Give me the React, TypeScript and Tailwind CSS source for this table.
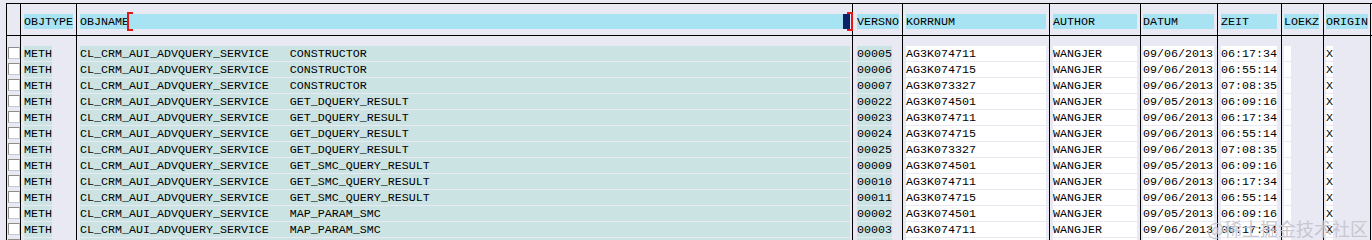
import React from "react";

const rows: string[][] = [
  ["CONSTRUCTOR", "00005", "AG3K074711", "09/06/2013", "06:17:34"],
  ["CONSTRUCTOR", "00006", "AG3K074715", "09/06/2013", "06:55:14"],
  ["CONSTRUCTOR", "00007", "AG3K073327", "09/06/2013", "07:08:35"],
  ["GET_DQUERY_RESULT", "00022", "AG3K074501", "09/05/2013", "06:09:16"],
  ["GET_DQUERY_RESULT", "00023", "AG3K074711", "09/06/2013", "06:17:34"],
  ["GET_DQUERY_RESULT", "00024", "AG3K074715", "09/06/2013", "06:55:14"],
  ["GET_DQUERY_RESULT", "00025", "AG3K073327", "09/06/2013", "07:08:35"],
  ["GET_SMC_QUERY_RESULT", "00009", "AG3K074501", "09/05/2013", "06:09:16"],
  ["GET_SMC_QUERY_RESULT", "00010", "AG3K074711", "09/06/2013", "06:17:34"],
  ["GET_SMC_QUERY_RESULT", "00011", "AG3K074715", "09/06/2013", "06:55:14"],
  ["MAP_PARAM_SMC", "00002", "AG3K074501", "09/05/2013", "06:09:16"],
  ["MAP_PARAM_SMC", "00003", "AG3K074711", "09/06/2013", "06:17:34"],
  ["MAP_PARAM_SMC", "00004", "AG3K074715", "09/06/2013", "06:55:14"],
];

const font = "font-['Liberation_Mono',monospace] text-[11.67px] leading-[17px] text-black whitespace-pre";

const cellTeal = "h-[15px] bg-[#cbe3e3] " + font;
const cellWhite = "h-[15px] bg-white " + font;
const cellHead = "h-[15px] bg-[#a8e3f3] " + font;

function Row({ h, children }: { h: string; children: React.ReactNode }) {
  return <div className={"flex " + h}>{children}</div>;
}

export default function App() {
  return (
    <div className="relative w-[1372px] h-[240px] overflow-hidden bg-[#e9e9f4]">
      <div className="mt-[3px] ml-[6px] w-[1366px] border-t border-black">
        {/* header */}
        <div className="flex h-[32px] border-b border-black">
          <div className="w-[14px] border-l border-black" />
          <div className="w-[56px] border-l border-black pl-[3px] pt-[10px]">
            <div className={cellHead + " w-[49px]"}>OBJTYPE</div>
          </div>
          <div className="w-[776px] border-l border-black pl-[3px] pt-[10px]">
            <div className="relative flex w-[770px]">
              <div className={cellHead + " w-[763px]"}>OBJNAME</div>
              <div className="h-[15px] w-[7px] bg-[#0c2268]" />
              <div className="absolute left-[47px] top-[-2px] h-[19px] w-[6px] border-l-2 border-t-2 border-b-2 border-[#e01818]" />
              <div className="absolute left-[767px] top-[-2px] h-[19px] w-[6px] border-r-2 border-t-2 border-b-2 border-[#e01818]" />
            </div>
          </div>
          <div className="w-[50px] border-l border-black pl-[4px] pt-[10px]">
            <div className={cellHead + " w-[42px]"}>VERSNO</div>
          </div>
          <div className="w-[147px] border-l border-black pl-[3px] pt-[10px]">
            <div className={cellHead + " w-[140px]"}>KORRNUM</div>
          </div>
          <div className="w-[91px] border-l border-black pl-[3px] pt-[10px]">
            <div className={cellHead + " w-[84px]"}>AUTHOR</div>
          </div>
          <div className="w-[77px] border-l border-black pl-[2px] pt-[10px]">
            <div className={cellHead + " w-[71px]"}>DATUM</div>
          </div>
          <div className="w-[64px] border-l border-black pl-[3px] pt-[10px]">
            <div className={cellHead + " w-[56px]"}>ZEIT</div>
          </div>
          <div className="w-[42px] border-l border-black pl-[2px] pt-[10px]">
            <div className={cellHead + " w-[35px]"}>LOEKZ</div>
          </div>
          <div className="w-[48px] border-x border-black pl-[2px] pt-[10px]">
            <div className={cellHead + " w-[42px]"}>ORIGIN</div>
          </div>
        </div>
        {/* spacer */}
        <Row h="h-[10px]">
          <div className="w-[14px] border-l border-black" />
          <div className="w-[56px] border-l border-black" />
          <div className="w-[776px] border-l border-black" />
          <div className="w-[50px] border-l border-black" />
          <div className="w-[147px] border-l border-black" />
          <div className="w-[91px] border-l border-black" />
          <div className="w-[77px] border-l border-black" />
          <div className="w-[64px] border-l border-black" />
          <div className="w-[42px] border-l border-black" />
          <div className="w-[48px] border-x border-black" />
        </Row>
        {rows.map((r, i) => (
          <Row key={i} h="h-[16px]">
            <div className="w-[14px] border-l border-black pl-[1px] pt-[1px]">
              <div className="h-[12px] w-[12px] bg-white border border-t-[#8c8c8c] border-l-[#8c8c8c] border-r-[#c8c8d0] border-b-[#c8c8d0]" />
            </div>
            <div className="w-[56px] border-l border-black pl-[3px]">
              <div className={cellTeal + " w-[28px]"}>METH</div>
            </div>
            <div className="w-[776px] border-l border-black pl-[3px]">
              <div className={cellTeal + " w-[770px]"}>{"CL_CRM_AUI_ADVQUERY_SERVICE   " + r[0]}</div>
            </div>
            <div className="w-[50px] border-l border-black pl-[4px]">
              <div className={cellTeal + " w-[35px]"}>{r[1]}</div>
            </div>
            <div className="w-[147px] border-l border-black pl-[3px]">
              <div className={cellWhite + " w-[140px]"}>{r[2]}</div>
            </div>
            <div className="w-[91px] border-l border-black pl-[3px]">
              <div className={cellWhite + " w-[84px]"}>WANGJER</div>
            </div>
            <div className="w-[77px] border-l border-black pl-[2px]">
              <div className={cellWhite + " w-[71px]"}>{r[3]}</div>
            </div>
            <div className="w-[64px] border-l border-black pl-[3px]">
              <div className={cellWhite + " w-[56px]"}>{r[4]}</div>
            </div>
            <div className="w-[42px] border-l border-black pl-[2px]">
              <div className={cellWhite + " w-[7px]"} />
            </div>
            <div className="w-[48px] border-x border-black pl-[2px]">
              <div className={cellWhite + " w-[7px]"}>X</div>
            </div>
          </Row>
        ))}
      </div>
      <div className="absolute left-[1207px] top-[216px] font-['Noto_Sans_CJK_SC',sans-serif] text-[18px] leading-[24px] text-[#c4c4cc] opacity-90 whitespace-nowrap">
        @稀土掘金技术社区
      </div>
    </div>
  );
}
